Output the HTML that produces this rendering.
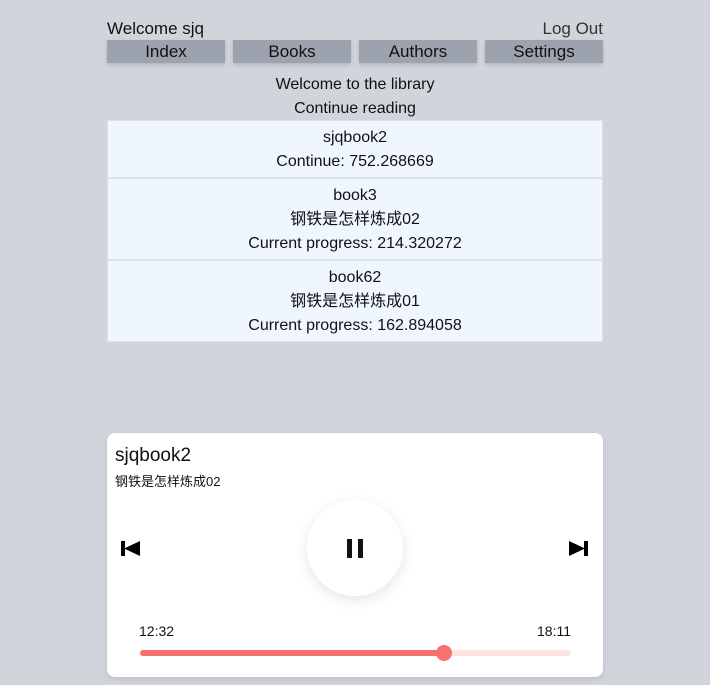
<!DOCTYPE html>
<html><head><meta charset="utf-8"><style>
*{margin:0;padding:0;box-sizing:border-box}
body{width:710px;height:685px;background:#d1d5db;font-family:"Segoe UI","Liberation Sans","Noto Sans CJK SC",sans-serif;color:#111;position:relative;overflow:hidden}
.top{position:absolute;left:107px;width:496px;top:17px;height:24px;font-size:17px;line-height:24px}
.top .r{position:absolute;right:0;top:0;color:#333}
.nav{position:absolute;top:40px;left:107px;width:496px;height:23px}
.nav div{position:absolute;top:0;width:118px;height:23px;background:#9ca3af;text-align:center;font-size:17px;line-height:24px;box-shadow:0 2px 4px rgba(0,0,0,.15)}
.c{position:absolute;left:107px;width:496px;text-align:center;font-size:16px;line-height:24px}
.card{position:absolute;left:107px;width:496px;background:#eff6ff;border:1px solid #dbe2ec;text-align:center;font-size:16px;line-height:24px;padding-top:5px}
.pl{position:absolute;left:107px;top:433px;width:496px;height:244px;background:#fff;border-radius:8px;box-shadow:0 2px 6px rgba(0,0,0,.1)}
</style></head><body>
<div class="top">Welcome sjq<span class="r">Log Out</span></div>
<div class="nav"><div style="left:0">Index</div><div style="left:126px">Books</div><div style="left:252px">Authors</div><div style="left:378px">Settings</div></div>
<div class="c" style="top:73px">Welcome to the library</div>
<div class="c" style="top:97px">Continue reading</div>
<div class="card" style="top:120px;height:58px">sjqbook2<br>Continue: 752.268669</div>
<div class="card" style="top:178px;height:82px">book3<br>钢铁是怎样炼成02<br>Current progress: 214.320272</div>
<div class="card" style="top:260px;height:82px">book62<br>钢铁是怎样炼成01<br>Current progress: 162.894058</div>
<div class="pl">
<div style="position:absolute;left:8px;top:10px;font-size:19px;line-height:26px">sjqbook2</div>
<div style="position:absolute;left:8px;top:40px;font-size:13px;line-height:18px">钢铁是怎样炼成02</div>
<svg style="position:absolute;left:14px;top:108px" width="20" height="16" viewBox="0 0 20 16"><rect x="0" y="0" width="4" height="15"/><path d="M3 7.5L19 0V15Z"/></svg>
<svg style="position:absolute;left:462px;top:108px" width="20" height="16" viewBox="0 0 20 16"><rect x="15" y="0" width="4" height="15"/><path d="M16 7.5L0 0V15Z"/></svg>
<div style="position:absolute;left:200px;top:67px;width:96px;height:96px;border-radius:50%;background:#fff;box-shadow:0 4px 14px rgba(0,0,0,.1)"></div>
<div style="position:absolute;left:240px;top:106px;width:5px;height:19px;background:#111"></div>
<div style="position:absolute;left:251px;top:106px;width:5px;height:19px;background:#111"></div>
<div style="position:absolute;left:32px;top:188px;font-size:14px;line-height:20px">12:32</div>
<div style="position:absolute;right:32px;top:188px;font-size:14px;line-height:20px">18:11</div>
<div style="position:absolute;left:33px;top:217px;width:431px;height:6px;border-radius:3px;background:#fee2e2"></div>
<div style="position:absolute;left:33px;top:217px;width:304px;height:6px;border-radius:3px;background:#f87171"></div>
<div style="position:absolute;left:329px;top:212px;width:16px;height:16px;border-radius:50%;background:#f87171"></div>
</div>
</body></html>
